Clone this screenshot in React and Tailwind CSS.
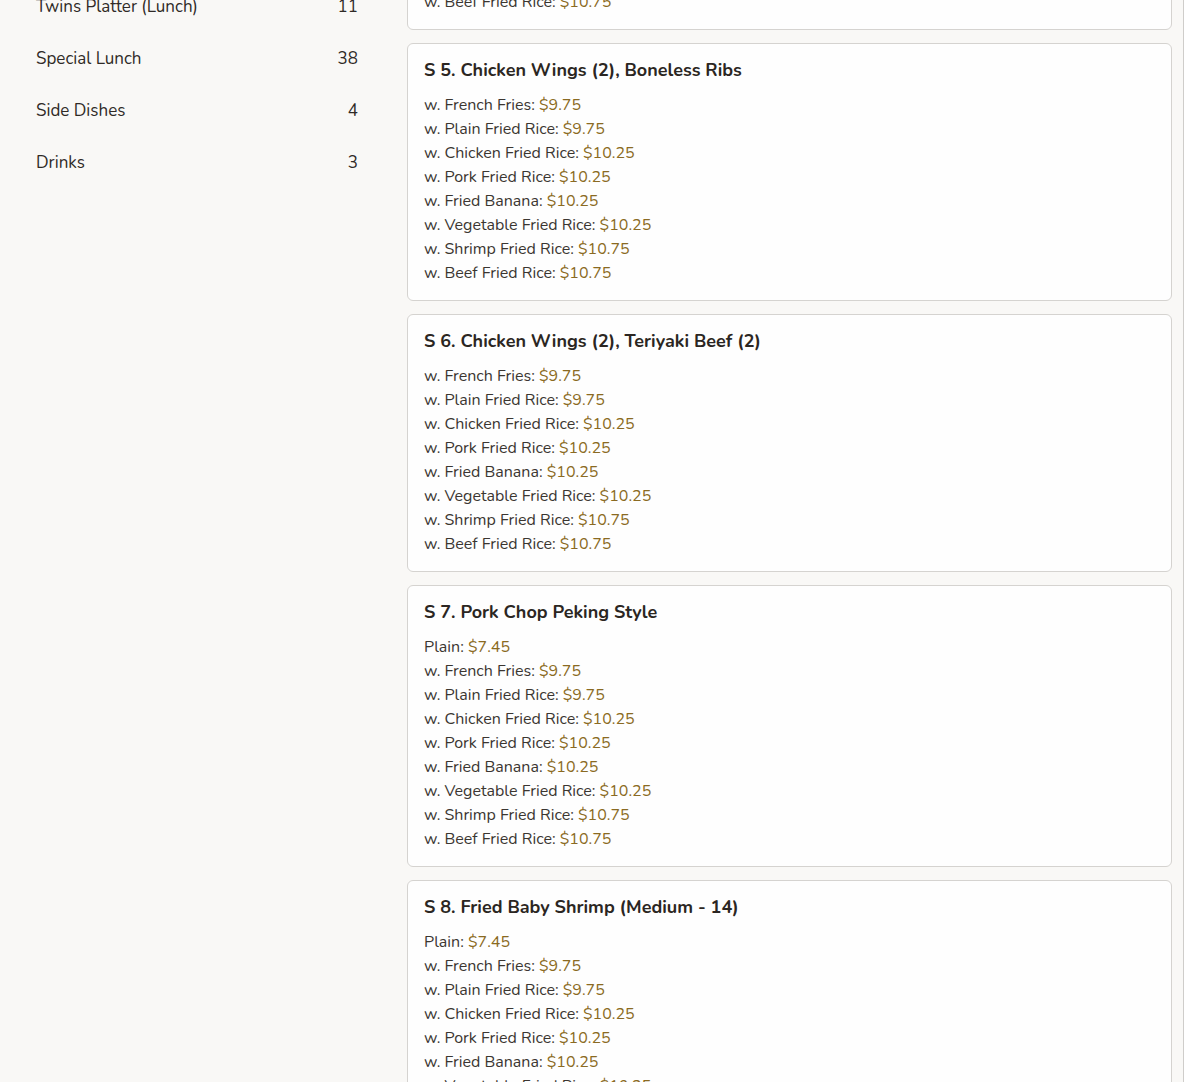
import React from "react";

const standard = [
  ["w. French Fries", "$9.75"],
  ["w. Plain Fried Rice", "$9.75"],
  ["w. Chicken Fried Rice", "$10.25"],
  ["w. Pork Fried Rice", "$10.25"],
  ["w. Fried Banana", "$10.25"],
  ["w. Vegetable Fried Rice", "$10.25"],
  ["w. Shrimp Fried Rice", "$10.75"],
  ["w. Beef Fried Rice", "$10.75"],
];

const items = [
  { title: "S 4. Chicken Wings (2), Egg Roll", opts: standard, first: true },
  { title: "S 5. Chicken Wings (2), Boneless Ribs", opts: standard },
  { title: "S 6. Chicken Wings (2), Teriyaki Beef (2)", opts: standard },
  { title: "S 7. Pork Chop Peking Style", opts: [["Plain", "$7.45"], ...standard] },
  { title: "S 8. Fried Baby Shrimp (Medium - 14)", opts: [["Plain", "$7.45"], ...standard] },
];

const cats = [
  ["Twins Platter (Lunch)", "11"],
  ["Special Lunch", "38"],
  ["Side Dishes", "4"],
  ["Drinks", "3"],
];

function Card({ item }) {
  return (
    <div
      className={
        "rounded-md border border-[#d5d3d0] bg-[#fefefe] px-4 pt-4 pb-[15px] " +
        (item.first ? "mt-[-228px]" : "")
      }
    >
      <h3 className="mb-[13px] text-[18px] font-bold leading-[20px] text-[#2b2622]">{item.title}</h3>
      <ul>
        {item.opts.map(([label, price], i) => (
          <li key={i} className="text-[16px] leading-[24px] text-[#3b3631]">
            {label}: <span className="text-[#8a6a22]">{price}</span>
          </li>
        ))}
      </ul>
    </div>
  );
}

export default function App() {
  return (
    <div
      className="flex h-[1082px] w-[1204px] overflow-hidden bg-[#f9f8f6]"
      style={{ fontFamily: "Nunito, Lato, 'Open Sans', sans-serif" }}
    >
      <aside className="w-[395px] shrink-0 pl-9 pr-[37px]">
        <ul className="mt-[-19px]">
          {cats.map(([name, n]) => (
            <li
              key={name}
              className="flex items-center justify-between py-[14px] text-[17px] leading-[24px] text-[#2f2a26]"
            >
              <span>{name}</span>
              <span>{n}</span>
            </li>
          ))}
        </ul>
      </aside>
      <main className="flex min-w-0 flex-1 flex-col gap-[13px] pl-3 pr-[11px]">
        {items.map((it, i) => (
          <Card key={i} item={it} />
        ))}
      </main>
      <div className="w-[21px] shrink-0 border-l border-[#cfcdca] bg-white" />
    </div>
  );
}
